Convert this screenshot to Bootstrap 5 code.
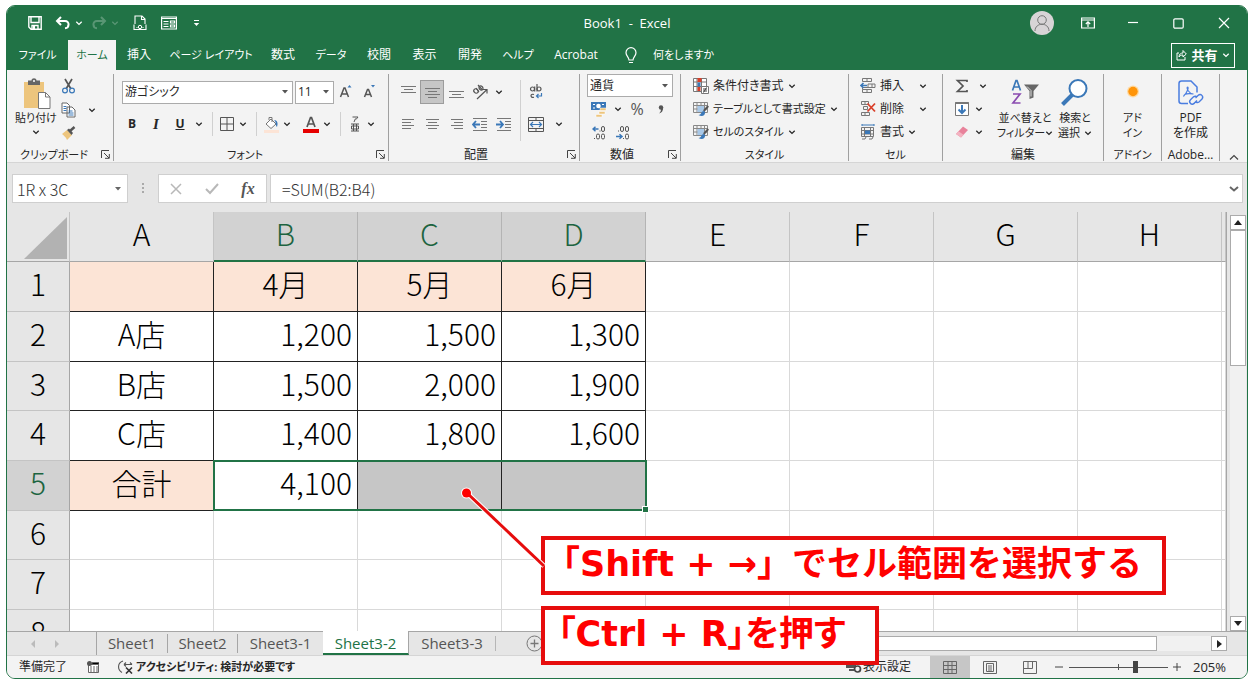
<!DOCTYPE html>
<html lang="ja">
<head>
<meta charset="utf-8">
<meta name="viewport" content="width=device-width, initial-scale=1">
<title>Book1 - Excel</title>
<link href="https://cdn.jsdelivr.net/npm/bootstrap@5.3.0/dist/css/bootstrap.min.css" rel="stylesheet">
<style>
:root{--xl:#217346;--line:#a6a6a6;--soft:#d9d9d9}
body{font-family:"Open Sans","Noto Sans CJK JP",sans-serif;font-size:12px;line-height:16px;color:#262626;background:#fff;padding:5px 6px 6px;font-feature-settings:"palt";overflow:hidden}
button{border:0;background:none;padding:0;color:inherit;font:inherit;font-feature-settings:inherit}
svg{display:block;flex:none}
.kana{font-size:11px}
.app{border:1px solid var(--xl);border-radius:9px;background:#e6e6e6}
.app-head{background:var(--xl);color:#fff}
.titlebar{height:34px}
.titlebar .side{flex:1 1 0}
.doc-title{white-space:pre;font-size:13px}
.avatar{width:24px;height:24px;border-radius:50%;background:#d8d4d6;overflow:hidden}
.tabs{height:30px}
.tab-grid{display:grid;grid-template-columns:61px 48px 46px 98px 46px 50px 46px 45px 46px 50px 66px}
.tab-grid a{color:#fff;text-decoration:none;text-align:center;line-height:30px;white-space:nowrap}
.tab-grid a.on{background:#f3f3f3;color:var(--xl)}
.share{width:64px;height:25px;border:1px solid #fff;font-weight:700;font-size:13px;margin-right:12px}
.ribbon{display:grid;grid-template-columns:107fr 275fr 191fr 101fr 168fr 94fr 161fr 58fr 58fr 27fr;height:93px;padding:4px 0 1px;background:#f3f3f3;border-bottom:1px solid #d5d5d5}
.grp{border-right:1px solid #a0a0a0;display:flex;flex-direction:column;min-width:0;white-space:nowrap}
.grp-body{flex:1;display:flex;min-height:0}
.grp-name{line-height:12px;position:relative;text-align:center;height:12px;padding-right:12px}
.grp-name.wide{padding-right:0}
.grp-name svg{position:absolute;right:3px;top:1px}
.big{display:flex;flex-direction:column;align-items:center;line-height:15px;margin-top:4px}
.t{width:24px;height:24px;display:flex;align-items:center;justify-content:center}
.t18{width:18px;height:24px;display:flex;align-items:center;justify-content:center}
.c{width:14px;height:24px;display:flex;align-items:center;justify-content:center}
.s{width:12px;height:24px;display:flex;justify-content:center}
.s::before{content:"";border-left:1px solid #d0d0d0}
.t.on{background:#c6c6c6;border:1px solid #9c9c9c}
.combo{height:23px;border:1px solid #ababab;border-radius:0;background:#fff url("data:image/svg+xml,%3Csvg xmlns='http://www.w3.org/2000/svg' viewBox='0 0 6 4'%3E%3Cpath d='M0 0h6L3 3.6z' fill='%23555'/%3E%3C/svg%3E") no-repeat right 4px center/6px 4px;appearance:none;padding:0 2px;font:inherit;font-feature-settings:"palt";color:#262626}
.fx-bar{height:49px;padding:11px 4px 0 5px;font-family:"Noto Sans CJK JP",sans-serif;font-weight:300;font-size:16px}
.fx-bar .cellbox{height:29px;background:#fff;border:1px solid #cfcfcf}
.fx-bar input{border:0;background:none;font:inherit;color:#333;min-width:0;padding:0;outline:0}
.sheet{min-height:0;overflow:hidden}
.grid-wrap{overflow:hidden;background:#fff;border-right:1px solid var(--line)}
.cells{table-layout:fixed;width:100%;border-collapse:separate;border-spacing:0;font-family:"Noto Sans CJK JP",sans-serif;font-weight:300;font-size:30px;line-height:40px;color:#000;font-feature-settings:normal}
.cells th{font-weight:300;text-align:center;background:#e6e6e6;padding:0 0 7px}
.cells td{padding:0 5px 7px;border-right:1px solid var(--soft);border-bottom:1px solid var(--soft);text-align:right}
.cells thead th{height:50px;border-right:1px solid #c4c4c4;border-bottom:1px solid var(--line)}
.cells thead th.corner{padding:0}
.cells thead th.sel{background:#d2d2d2;color:#1d6440;border-right-color:#b4b4b4;border-bottom:2px solid var(--xl)}
.cells tbody tr{height:50px}
.cells tbody tr:nth-child(3n){height:49px}
.cells tbody th{border-right:1px solid var(--line);border-bottom:1px solid #c4c4c4}
.cells tbody th.sel{background:#d2d2d2;color:#1d6440}
.cells td.bx{border-color:#222}
.cells td.hd{background:#fce4d6;text-align:center}
.cells td.nm{text-align:center}
.cells td.pick{background:#c6c6c6}
.range{position:absolute;z-index:1;left:-1px;top:-1px;width:calc(300% + 5px);height:calc(100% + 2px);border:2px solid var(--xl);pointer-events:none}
.range::after{content:"";position:absolute;right:-3px;bottom:-3px;width:5px;height:5px;background:var(--xl);outline:1px solid #fff}
.vscroll{width:20px;padding:3px 1px 0 3px}
.sbtn{width:16px;height:15px;background:#fff;border:1px solid #ababab;display:flex;align-items:center;justify-content:center}
.vthumb{width:16px;height:136px;background:#fff;border:1px solid #ababab}
.vtrack{background:#f1f1f1;width:16px}
.sheetbar{height:25px;border-top:1px solid var(--line);border-bottom:1px solid #d5d5d5}
.sheetbar a{height:22px;line-height:22px;font-size:15px;color:#555;text-decoration:none;text-align:center;width:86px}
.sheetbar a.short{width:70px}
.sheetbar a+a::before{content:"";float:left;border-left:1px solid var(--line);height:19px;margin-top:2px}
.sheetbar a.on{background:#fff;color:var(--xl);border-bottom:2px solid var(--xl);border-right:1px solid var(--line);margin-top:-1px;height:24px;line-height:24px}
.sheetbar a.on+a::before,.sheetbar a.on::before{display:none}
.hthumb{height:15px;background:#fff;border:1px solid #ababab;width:330px}
.status{height:22px;background:#f3f3f3;border-radius:0 0 8px 8px}
.view{width:40px;height:22px;display:flex;align-items:center;justify-content:center}
.view.on{background:#c6c6c6}
.zoom{appearance:none;width:99px;height:12px;background:linear-gradient(#555,#555) center/100% 1px no-repeat,linear-gradient(#555,#555) center/1px 6px no-repeat;margin:0}
.zoom::-webkit-slider-thumb{appearance:none;width:5px;height:12px;background:#444}
.note{position:absolute;z-index:3;left:534px;height:59px;border:4px solid #e60d0d;background:#fff;color:#f00;font:700 35px/48px "DejaVu Sans","Noto Sans CJK JP",sans-serif;font-feature-settings:normal;white-space:nowrap}
.note-a{top:530px;width:625px}
.note-b{top:600px;width:338px;padding-left:13px;font-feature-settings:"palt"}
.leader{position:absolute;z-index:4;left:453px;top:480px}
</style>
</head>
<body class="vh-100">
<svg width="0" height="0" class="position-absolute" aria-hidden="true">
<symbol id="chev" viewBox="0 0 8 8"><path d="M1.3 2.8 4 5.4l2.700-2.600" fill="none" stroke="currentColor" stroke-width="1.300"/></symbol>
<symbol id="launch" viewBox="0 0 9 9"><path d="M.5 8V.5H8M3 3l5 5M8.300 4v4.300H4" fill="none" stroke="#444"/></symbol>
<symbol id="brushtable" viewBox="0 0 16 16"><path d="M.5 1.500h14v10H.5zM.5 4.500h14M.5 8h14M4 1.500v10M8 1.500v10M11.500 1.500v10" fill="none" stroke="#888"/><path d="M4.500 5h6.500v6H4.500z" fill="#a8c8e8"/><path d="m15.300 5-4.500 5" stroke="#555" stroke-width="2"/><path d="M11 10c-3 0-2 3.500-5.500 4 3 1.800 7 1 6.500-3z" fill="#3b78b8"/></symbol>
</svg>

<div class="app position-relative d-flex flex-column h-100">
 <header class="app-head rounded-top-3 flex-shrink-0">
  <div class="titlebar d-flex align-items-center">
   <div class="side d-flex align-items-center">
    <button aria-label="保存" style="margin-left:21px"><svg width="14" height="14" viewBox="0 0 14 14"><path d="M.8.8h12.400v12.400H3L.8 11zM3 1v5.500h8V1M4 13V9.500h6V13" fill="none" stroke="#fff" stroke-width="1.400"/><path d="M5 10h2v3H5z" fill="#fff"/></svg></button>
    <button aria-label="元に戻す" class="d-flex align-items-center gap-1" style="margin-left:13px"><svg width="16" height="14" viewBox="0 0 16 14"><path d="M6 1 2 5l4 4M2.500 5h7.500c5 0 4.500 7 0 7.300" fill="none" stroke="#fff" stroke-width="2"/></svg><svg width="8" height="8"><use href="#chev"/></svg></button>
    <button aria-label="やり直し" class="d-flex align-items-center gap-1 ms-2 opacity-25"><svg width="16" height="14" viewBox="0 0 16 14"><path d="m10 1 4 4-4 4M13.500 5H6C1 5 1.500 12 6 12.300" fill="none" stroke="#fff" stroke-width="2"/></svg><svg width="8" height="8"><use href="#chev"/></svg></button>
    <button aria-label="印刷プレビュー" style="margin-left:14px"><svg width="14" height="16" viewBox="0 0 14 16"><path d="M2 9V1h7l3 3v5M8.500 1v3.500H12M1 9.500v5h12v-5M3.500 12.500h1M9.500 12.500h1" fill="none" stroke="#fff" stroke-width="1.100"/><circle cx="7" cy="12" r="1.700" fill="none" stroke="#fff"/></svg></button>
    <button aria-label="フォーム" style="margin-left:14px"><svg width="16" height="14" viewBox="0 0 16 14"><path d="M.6 1h14.800v12H.6zM1 2.500h14M2.500 5.500h5M2.500 8h5M2.500 10.500h5M9.500 5h4v2h-4zM9.500 9h4v2h-4z" fill="none" stroke="#fff" stroke-width="1.200"/></svg></button>
    <button aria-label="ユーザー設定" class="ms-3"><svg width="7" height="8" viewBox="0 0 7 8"><path d="M1 1.500h5" stroke="#fff"/><path d="M.8 4h5.400L3.500 7z" fill="#fff"/></svg></button>
   </div>
   <div class="doc-title">Book1  -  Excel</div>
   <div class="side d-flex align-items-center justify-content-end">
    <button aria-label="アカウント" class="avatar"><svg width="24" height="24" viewBox="0 0 24 24"><circle cx="12" cy="9" r="4.300" fill="none" stroke="#777"/><path d="M5 20c0-9 14-9 14 0" fill="none" stroke="#777"/></svg></button>
    <button aria-label="リボンの表示オプション" style="margin-left:27px"><svg width="14" height="12" viewBox="0 0 14 12"><path d="M.6 1h12.800v10H.6zM1 3h12M7 10V5M4.800 7 7 4.800 9.200 7" fill="none" stroke="#fff" stroke-width="1.200"/></svg></button>
    <button aria-label="最小化" style="margin-left:32px"><svg width="12" height="12" viewBox="0 0 12 12"><path d="M1 5.500h10" stroke="#fff" stroke-width="1.200"/></svg></button>
    <button aria-label="最大化" style="margin-left:34px"><svg width="11" height="11" viewBox="0 0 11 11"><rect x=".8" y=".8" width="9.400" height="9.400" rx="1.200" fill="none" stroke="#fff" stroke-width="1.200"/></svg></button>
    <button aria-label="閉じる" style="margin:0 17px 0 34px"><svg width="12" height="12" viewBox="0 0 12 12"><path d="m1 1 10 10M11 1 1 11" stroke="#fff" stroke-width="1.200"/></svg></button>
   </div>
  </div>
  <div class="tabs d-flex align-items-center">
   <nav class="tab-grid"><a href="#" class="kana">ファイル</a><a href="#" class="on kana">ホーム</a><a href="#">挿入</a><a href="#" class="kana">ページ レイアウト</a><a href="#">数式</a><a href="#" class="kana">データ</a><a href="#">校閲</a><a href="#">表示</a><a href="#">開発</a><a href="#" class="kana">ヘルプ</a><a href="#">Acrobat</a></nav>
   <button class="d-flex align-items-center ms-3"><svg width="12" height="17" viewBox="0 0 12 17" class="me-3"><path d="M4 13c0-3-3-4-3-7.300a5 5 0 0 1 10 0C11 9 8 10 8 13zM4 15.500h4" fill="none" stroke="#fff" stroke-width="1.200"/></svg><span class="kana">何をしますか</span></button>
   <button class="share ms-auto d-flex align-items-center justify-content-center gap-1"><svg width="11" height="12" viewBox="0 0 11 12"><path d="M3 4H1v7h8V8M3 8c0-3 2-4 4-4V1.500L10.300 5 7 8V6C5 6 4 6.500 3 8z" fill="none" stroke="#fff"/></svg>共有<svg width="8" height="8"><use href="#chev"/></svg></button>
  </div>
 </header>

 <section class="ribbon flex-shrink-0" aria-label="ホーム">
  <div class="grp">
   <div class="grp-body">
    <button class="big kana ps-2"><svg width="32" height="32" viewBox="0 0 32 32"><path d="M4 4h20v26H4z" fill="#edc57d"/><path d="M8 2.500h3.500c0-3 5-3 5 0H20V7H8z" fill="#666"/><circle cx="14" cy="3" r="1" fill="#fff"/><path d="M18.500 14.500h7l4.500 4.500v11.500H18.500z" fill="#fff" stroke="#777"/><path d="M25.500 14.500V19H30" fill="none" stroke="#777"/></svg>貼り付け<svg width="8" height="14"><use href="#chev"/></svg></button>
    <div class="d-flex flex-column ps-1 gap-2 pt-1 ms-px">
     <button aria-label="切り取り"><svg width="16" height="16" viewBox="0 0 16 16"><path d="m4 1 6 10M11 1 5 11" stroke="#555" stroke-width="1.700"/><circle cx="4" cy="12.500" r="2.400" fill="none" stroke="#3b78b8" stroke-width="1.200"/><circle cx="11" cy="12.500" r="2.400" fill="none" stroke="#3b78b8" stroke-width="1.200"/></svg></button>
     <button aria-label="コピー" class="d-flex align-items-center"><svg width="16" height="16" viewBox="0 0 16 16"><path d="M1 1h5l2.500 2.500V11H1zM6 5h5l3 3v7H6z" fill="#fff" stroke="#666"/><path d="M2.500 4.500h3M2.500 6.500h3M2.500 8.500h3M7.500 9h4M7.500 11h5M7.500 13h5" stroke="#3b78b8"/></svg><svg width="8" height="8" style="margin-left:11px"><use href="#chev"/></svg></button>
     <button aria-label="書式のコピー"><svg width="16" height="14" viewBox="0 0 16 14"><path d="m1 8 5-4 5 5-5 5c-1-3-3-4-5-6z" fill="#edc57d"/><path d="m6 4 2-1.500L12 7l-1.500 2z" fill="#555"/><path d="m9 5 4.500-4" stroke="#555" stroke-width="2.500"/></svg></button>
    </div>
   </div>
   <div class="grp-name kana">クリップボード<svg width="9" height="9"><use href="#launch"/></svg></div>
  </div>

  <div class="grp">
   <div class="grp-body flex-column ps-2" style="padding-top:6px">
    <div class="d-flex align-items-center">
     <select class="combo kana" aria-label="フォント" style="width:171px"><option>游ゴシック</option></select>
     <select class="combo" aria-label="フォント サイズ" style="width:39px;margin-left:2px"><option>11</option></select>
     <button class="t" aria-label="拡大"><svg width="14" height="16" viewBox="0 0 14 16"><path d="m1.500 13 3.500-9h1l3.500 9M3 10h5" fill="none" stroke="#555" stroke-width="1.500"/><path d="M8.500 3.500h4L10.500 1z" fill="#3b78b8"/></svg></button>
     <button class="t" aria-label="縮小"><svg width="14" height="16" viewBox="0 0 14 16"><path d="m1.500 13 3-7.500h1l3 7.500M3 10.500h4" fill="none" stroke="#555" stroke-width="1.500"/><path d="M8 1h4l-2 2.500z" fill="#3b78b8"/></svg></button>
    </div>
    <div class="d-flex align-items-center mt-2" style="margin-left:-2px">
     <button class="t fw-bold">B</button><button class="t fw-bold fst-italic" style="font-family:'Liberation Serif',serif;font-size:15px">I</button><button class="t fw-bold text-decoration-underline">U</button><button class="c" aria-label="下線"><svg width="8" height="8"><use href="#chev"/></svg></button><span class="s"></span>
     <button class="t18" aria-label="罫線"><svg width="14" height="14" viewBox="0 0 14 14"><path d="M.5.5h13v13H.5zM7 1v12M1 7h12" fill="none" stroke="#555"/></svg></button><button class="c" aria-label="罫線の種類"><svg width="8" height="8"><use href="#chev"/></svg></button><span class="s"></span>
     <button class="t18" aria-label="塗りつぶし"><svg width="17" height="17" viewBox="0 0 17 17"><path d="M1 14h15v3H1z" fill="#fce4d6"/><path d="m3 8 5-5 5 5-5 4.500zM6 4V1.500h3V6" fill="#fff" stroke="#777"/><path d="M11 4c4 0 4 4 3 7-2-2 0-4-3-7z" fill="#3b78b8"/></svg></button><button class="c me-2" aria-label="塗りつぶしの色"><svg width="8" height="8"><use href="#chev"/></svg></button>
     <button class="t18" aria-label="フォントの色"><svg width="16" height="17" viewBox="0 0 16 17"><path d="M4 11 7.500 1.500h1L12 11M5 8h6" fill="none" stroke="#555" stroke-width="1.700"/><path d="M0 13h16v4H0z" fill="#e60000"/></svg></button><button class="c" aria-label="文字の色"><svg width="8" height="8"><use href="#chev"/></svg></button><span class="s"></span>
     <button class="t18" aria-label="ふりがな"><svg width="12" height="16" viewBox="0 0 12 16"><path d="M3.500 1H9L7 3.500M6.500 2.500 5 6M2 8h8M2 15h8M4.500 8v7M7.500 8v7M2.500 10h7v3h-7z" fill="none" stroke="#555"/></svg></button><button class="c" aria-label="ふりがなの設定"><svg width="8" height="8"><use href="#chev"/></svg></button>
    </div>
   </div>
   <div class="grp-name kana">フォント<svg width="9" height="9"><use href="#launch"/></svg></div>
  </div>

  <div class="grp">
   <div class="grp-body" style="padding:6px 0 0 7px">
    <div>
     <div class="d-flex">
      <button class="t" aria-label="上揃え"><svg width="15" height="14" viewBox="0 0 15 14"><path d="M0 1.500h15M3 4.500h9M0 7.500h15" stroke="#777"/></svg></button>
      <button class="t on" aria-label="上下中央揃え"><svg width="15" height="14" viewBox="0 0 15 14"><path d="M0 3.500h15M3 6.500h9M0 9.500h15M3 12.500h9" stroke="#777"/></svg></button>
      <button class="t" aria-label="下揃え"><svg width="15" height="14" viewBox="0 0 15 14"><path d="M0 6.500h15M3 9.500h9M0 12.500h15" stroke="#777"/></svg></button>
      <button class="t" aria-label="方向"><svg width="17" height="16" viewBox="0 0 17 16"><g fill="none" stroke="#555" stroke-width="1.200"><ellipse cx="4" cy="7" rx="2" ry="2.400" transform="rotate(-45 4 7)"/><path d="m4 4 3 4M6 1l4.500 5M5 15 15 5.500M11 5.500h4v4"/><ellipse cx="9" cy="4" rx="1.800" ry="2.200" transform="rotate(-45 9 4)"/></g></svg></button>
      <button class="c" aria-label="方向の種類"><svg width="8" height="8"><use href="#chev"/></svg></button>
     </div>
     <div class="d-flex mt-2">
      <button class="t" aria-label="左揃え"><svg width="13" height="12" viewBox="0 0 13 12"><path d="M0 1.500h12M0 4.500h9M0 7.500h12M0 10.500h9" stroke="#777"/></svg></button>
      <button class="t" aria-label="中央揃え"><svg width="13" height="12" viewBox="0 0 13 12"><path d="M0 1.500h13M2 4.500h9M0 7.500h13M2 10.500h9" stroke="#777"/></svg></button>
      <button class="t" aria-label="右揃え"><svg width="13" height="12" viewBox="0 0 13 12"><path d="M1 1.500h12M4 4.500h9M1 7.500h12M4 10.500h9" stroke="#777"/></svg></button>
      <button class="t" aria-label="インデントを減らす"><svg width="16" height="13" viewBox="0 0 16 13"><path d="M1 .5h14M9 3.500h6M9 6.500h6M9 9.500h6M1 12.500h14" stroke="#777"/><path d="M8 6.500H1M4 3 1 6.500 4 10" fill="none" stroke="#3b78b8" stroke-width="1.800"/></svg></button>
      <button class="t" aria-label="インデントを増やす"><svg width="16" height="13" viewBox="0 0 16 13"><path d="M1 .5h14M9 3.500h6M9 6.500h6M9 9.500h6M1 12.500h14" stroke="#777"/><path d="M0 6.500h7M4 3l3 3.500L4 10" fill="none" stroke="#3b78b8" stroke-width="1.800"/></svg></button>
     </div>
    </div>
    <span class="s h-100 pb-2" style="width:8px"></span>
    <div>
     <button class="t" aria-label="折り返して全体を表示する"><svg width="14" height="16" viewBox="0 0 14 16"><g fill="none" stroke="#555" stroke-width="1.200"><circle cx="3.500" cy="5" r="2"/><path d="M5.700 2.500V7.500M8 0v7.500M5 10.500c-4-1.500-4 4 0 2.700"/><circle cx="10" cy="5" r="2"/></g><path d="M12.500 9v3H8M9.500 10 7.500 12l2 2" fill="none" stroke="#3b78b8" stroke-width="1.200"/></svg></button>
     <div class="d-flex mt-2"><button class="t" aria-label="セルを結合して中央揃え"><svg width="16" height="15" viewBox="0 0 16 15"><path d="M.5.500h15v14H.5zM.5 3.500h15M.5 11.500h15M8 .5v3M8 11.500v3" fill="none" stroke="#555"/><path d="M2.500 7.500h11M5 5 2.500 7.500 5 10M11 5l2.500 2.500L11 10" fill="none" stroke="#3b78b8" stroke-width="1.200"/></svg></button><button class="c ms-1" aria-label="結合の種類"><svg width="8" height="8"><use href="#chev"/></svg></button></div>
    </div>
   </div>
   <div class="grp-name" style="padding-right:16px">配置<svg width="9" height="9"><use href="#launch"/></svg></div>
  </div>

  <div class="grp">
   <div class="grp-body flex-column" style="padding-left:7px">
    <select class="combo" aria-label="表示形式" style="width:86px"><option>通貨</option></select>
    <div class="d-flex align-items-center">
     <button class="t" aria-label="通貨表示形式"><svg width="16" height="16" viewBox="0 0 16 16"><path d="M0 1h15v8H0z" fill="#3b78b8"/><path d="M2 3.500h2M11 3.500h2M2 7h2" stroke="#fff"/><circle cx="7.500" cy="5" r="2.300" fill="#fff"/><path d="M9 7h6v2.500H9zM8 10.500h6V13H8zM5 13.500h6V16H5z" fill="#edc57d" stroke="#fff" stroke-width=".5"/></svg></button><button class="c" aria-label="通貨の種類"><svg width="8" height="8"><use href="#chev"/></svg></button>
     <button class="t" style="font-size:16px;color:#555">%</button><button class="t fw-bold" aria-label="桁区切り"><svg width="6" height="9" viewBox="0 0 6 9"><circle cx="3" cy="2.500" r="2.200" fill="#555"/><path d="M5.200 2.500C5.200 6 3.500 8 1 8.500 2.500 7 3 6 3 4z" fill="#555"/></svg></button>
    </div>
    <div class="d-flex">
     <button class="t" aria-label="小数点以下の表示桁数を増やす"><svg width="14" height="14" viewBox="0 0 14 14"><path d="M6.500 3H1M3.500.8 1 3l2.500 2.200" fill="none" stroke="#3b78b8" stroke-width="1.500"/><g fill="none" stroke="#555"><rect x="9.500" y=".5" width="3" height="5" rx="1.500"/><rect x="4.500" y="8" width="3" height="5" rx="1.500"/><rect x="9.500" y="8" width="3" height="5" rx="1.500"/><path d="M7.500 5h1M2 12.500h1"/></g></svg></button>
     <button class="t" aria-label="小数点以下の表示桁数を減らす"><svg width="14" height="14" viewBox="0 0 14 14"><path d="M0 10.500h6M3.500 8.300 6 10.500l-2.500 2.200" fill="none" stroke="#3b78b8" stroke-width="1.500"/><g fill="none" stroke="#555"><rect x="9.500" y=".5" width="3" height="5" rx="1.500"/><rect x="4.500" y=".5" width="3" height="5" rx="1.500"/><rect x="9.500" y="8" width="3" height="5" rx="1.500"/><path d="M2 5h1M7 12.500h1"/></g></svg></button>
    </div>
   </div>
   <div class="grp-name" style="padding-right:16px">数値<svg width="9" height="9"><use href="#launch"/></svg></div>
  </div>

  <div class="grp">
   <div class="grp-body flex-column kana" style="padding-left:12px">
    <button class="d-flex align-items-center gap-1" style="height:23px"><svg width="16" height="16" viewBox="0 0 16 16"><path d="M.5.500h13v13H.5zM4 .5v13M8.500.5v13M.5 4h13M.5 8.500h13" fill="#fff" stroke="#777"/><path d="M4.500 0h4v4h-4zM4.500 9h3v4h-3z" fill="#d9402a"/><path d="M4.500 4.500h3v4h-3z" fill="#3b78b8"/><path d="M8.500 8.500h7v7h-7z" fill="#fff" stroke="#777"/><path d="M10 11h4M10 13h4M13.500 9.500l-3 5" stroke="#444"/></svg><span style="font-size:12px">条件付き書式</span><svg width="8" height="8"><use href="#chev"/></svg></button>
    <button class="d-flex align-items-center gap-1" style="height:23px"><svg width="16" height="16"><use href="#brushtable"/></svg>テーブルとして書式設定<svg width="8" height="8"><use href="#chev"/></svg></button>
    <button class="d-flex align-items-center gap-1" style="height:23px"><svg width="16" height="16"><use href="#brushtable"/></svg>セルのスタイル<svg width="8" height="8"><use href="#chev"/></svg></button>
   </div>
   <div class="grp-name wide kana">スタイル</div>
  </div>

  <div class="grp">
   <div class="grp-body flex-column" style="padding-left:11px">
    <button class="d-flex align-items-center gap-1" style="height:23px"><svg width="16" height="15" viewBox="0 0 16 15"><path d="M2.500.5h9v3h-9zM7 .5v3M2.500 11.500h9v3h-9zM7 11.500v3M8 6h7v3.500H8zM12 6v3.500M2.500 11.500v-2h9" fill="none" stroke="#777"/><path d="M7 7.500H1M3.500 5 1 7.500 3.500 10" fill="none" stroke="#3b78b8" stroke-width="1.600"/></svg>挿入<svg width="8" height="8" style="margin-left:11px"><use href="#chev"/></svg></button>
    <button class="d-flex align-items-center gap-1" style="height:23px"><svg width="16" height="15" viewBox="0 0 16 15"><path d="M1.500.5h7v3h-7zM5 .5v3M1.500 11.500h8v3h-8zM5 11.500v3M3.500 5.500h4v3h-4z" fill="none" stroke="#777"/><path d="m7.500 2.500 7.500 8M15 2.500l-7.500 8" stroke="#d9402a" stroke-width="1.800"/></svg>削除<svg width="8" height="8" style="margin-left:11px"><use href="#chev"/></svg></button>
    <button class="d-flex align-items-center gap-1" style="height:23px"><svg width="16" height="16" viewBox="0 0 16 16"><path d="M1.500 3.500h12v9h-12zM4.500 3.500v9M10.500 3.500v9M1.500 6.500h12M1.500 10h12M2 15h3l1-2M9 15h3l1-2" fill="none" stroke="#777"/><path d="M2 1h12M2 0v2M14 0v2" stroke="#3b78b8"/><path d="M5 6.500h5V10H5z" fill="#3b78b8"/></svg>書式<svg width="8" height="8"><use href="#chev"/></svg></button>
   </div>
   <div class="grp-name wide kana">セル</div>
  </div>

  <div class="grp">
   <div class="grp-body" style="padding-left:10px">
    <div class="d-flex flex-column" style="width:44px">
     <button class="d-flex align-items-center" style="height:23px" aria-label="オート SUM"><svg width="18" height="14" viewBox="0 0 18 14"><path d="M14 3V1.500H4.500L10 7l-5.500 5.500H14V11" fill="none" stroke="#555" stroke-width="1.700"/></svg><svg width="8" height="8" class="ms-2"><use href="#chev"/></svg></button>
     <button class="d-flex align-items-center gap-1" style="height:23px" aria-label="フィル"><svg width="18" height="14" viewBox="0 0 18 14"><path d="M2.500.5h13v13h-13z" fill="#fff" stroke="#777"/><path d="M2.500 1h13" stroke="#777" stroke-width="2"/><path d="M9 3v8M5.500 7.500 9 11l3.500-3.500" fill="none" stroke="#3b78b8" stroke-width="2"/></svg><svg width="8" height="8"><use href="#chev"/></svg></button>
     <button class="d-flex align-items-center gap-1" style="height:23px" aria-label="クリア"><svg width="18" height="14" viewBox="0 0 18 14"><path d="m3 9 7-7.500 5 3.500-7 7.500z" fill="#e8829b"/><path d="m3 9 2.500-2.700 5 3.500L8 12.500z" fill="#f3b3c1"/></svg><svg width="8" height="8"><use href="#chev"/></svg></button>
    </div>
    <button class="big kana" style="width:56px"><svg width="30" height="32" viewBox="0 0 30 31"><g fill="none" stroke-width="1.700"><path d="M2.500 12 6 2h1l3.500 10M4 8.500h5" stroke="#3b78b8"/><path d="M3 15.500h7l-7 9h7.500" stroke="#8a4bb0"/></g><path d="M14 6h15l-5.500 6.500V19l-4 1.500v-8z" fill="#666"/><path d="m17 8 4 4v6" fill="none" stroke="#ddd"/></svg>並べ替えと<br><span class="d-flex align-items-center">フィルター<svg width="8" height="8"><use href="#chev"/></svg></span></button>
    <button class="big kana" style="width:44px"><svg width="30" height="32" viewBox="0 0 30 31"><circle cx="18" cy="10" r="8.500" fill="#fff" stroke="#3b78b8" stroke-width="2"/><path d="M12 16.500 2.500 26" stroke="#3b78b8" stroke-width="4"/></svg>検索と<br><span class="d-flex align-items-center">選択<svg width="8" height="8" class="ms-1"><use href="#chev"/></svg></span></button>
   </div>
   <div class="grp-name wide">編集</div>
  </div>

  <div class="grp">
   <div class="grp-body justify-content-center"><button class="big kana"><svg width="30" height="32" viewBox="0 0 30 31"><circle cx="15" cy="13" r="6" fill="#ffd9a0"/><circle cx="15" cy="13" r="4.700" fill="#ff9408"/></svg><span>アド<br>イン</span></button></div>
   <div class="grp-name wide kana">アドイン</div>
  </div>

  <div class="grp">
   <div class="grp-body justify-content-center"><button class="big"><svg width="30" height="32" viewBox="0 0 30 31"><g fill="none" stroke="#4a7de0" stroke-width="1.500"><path d="M13 25H6.500A2.500 2.500 0 0 1 4 22.500V5A2.500 2.500 0 0 1 6.500 2.500H16L22 8.500V14"/><path d="M12.500 8.500c1.500 0 .5 4-4 9.500M12.500 8.500c-1.200 1 1 6.500 6 7M8.500 18c.5-2.500 5-3.300 10-2.500" stroke-width="1.100"/><path d="m20.500 19.500 2.500-2.500c3-2.500 6 1 4 3.500l-3 3c-1.500 1-3 .5-3.500-.5M22 22l-2.500 2.500c-1 1.500-3 1.500-4 .5s-1-2.700 0-3.700l3-3c1.500-1 3-.5 3.500.5" stroke-width="1.400"/></g></svg><span>PDF<br>を作成</span></button></div>
   <div class="grp-name wide">Adobe…</div>
  </div>
  <div class="d-flex align-items-end justify-content-center"><button aria-label="リボンを折りたたむ"><svg width="10" height="7" viewBox="0 0 10 7"><path d="M1 5.500 5 1.500l4 4" fill="none" stroke="#444" stroke-width="1.200"/></svg></button></div>
 </section>

 <div class="fx-bar d-flex flex-shrink-0">
  <div class="cellbox d-flex align-items-center" style="width:116px"><input class="flex-grow-1 ps-1" aria-label="名前ボックス" value="1R x 3C"><svg width="14" height="6" viewBox="0 0 14 6"><path d="M2 1h6L5 4.500z" fill="#666"/></svg></div>
  <svg width="30" height="29" viewBox="0 0 30 29"><path d="M14 9h2v2h-2zM14 13h2v2h-2zM14 17h2v2h-2z" fill="#aaa"/></svg>
  <div class="cellbox d-flex align-items-center justify-content-around" style="width:109px">
   <button aria-label="キャンセル"><svg width="12" height="12" viewBox="0 0 12 12"><path d="m1 1 10 10M11 1 1 11" stroke="#b8b8b8" stroke-width="1.500"/></svg></button>
   <button aria-label="入力"><svg width="14" height="12" viewBox="0 0 14 12"><path d="m1 6 4 4 8-9" fill="none" stroke="#b8b8b8" stroke-width="2"/></svg></button>
   <button aria-label="関数の挿入" class="fst-italic fw-bold" style="font-family:'Liberation Serif',serif;color:#555">fx</button>
  </div>
  <div class="cellbox d-flex align-items-center flex-grow-1" style="margin-left:3px"><input class="flex-grow-1" style="margin-left:11px" aria-label="数式バー" value="=SUM(B2:B4)"><svg width="16" height="10" viewBox="0 0 16 10"><path d="m4 3 4 3.500L12 3" fill="none" stroke="#666" stroke-width="2"/></svg></div>
 </div>

 <main class="sheet d-flex flex-grow-1">
  <div class="grid-wrap flex-grow-1">
   <table class="cells">
    <colgroup><col style="width:63px"><col style="width:144px"><col style="width:144px"><col style="width:144px"><col style="width:144px"><col style="width:144px"><col style="width:144px"><col style="width:144px"><col style="width:144px"><col></colgroup>
    <thead><tr><th class="corner" aria-label="すべて選択"><svg width="62" height="48" viewBox="0 0 62 48"><path d="M60 4v42H17z" fill="#b2b2b2"/></svg></th><th>A</th><th class="sel">B</th><th class="sel">C</th><th class="sel">D</th><th>E</th><th>F</th><th>G</th><th>H</th><th></th></tr></thead>
    <tbody>
     <tr><th>1</th><td class="bx hd"></td><td class="bx hd">4月</td><td class="bx hd">5月</td><td class="bx hd">6月</td><td></td><td></td><td></td><td></td><td></td></tr>
     <tr><th>2</th><td class="bx nm">A店</td><td class="bx">1,200</td><td class="bx">1,500</td><td class="bx">1,300</td><td></td><td></td><td></td><td></td><td></td></tr>
     <tr><th>3</th><td class="bx nm">B店</td><td class="bx">1,500</td><td class="bx">2,000</td><td class="bx">1,900</td><td></td><td></td><td></td><td></td><td></td></tr>
     <tr><th>4</th><td class="bx nm">C店</td><td class="bx">1,400</td><td class="bx">1,800</td><td class="bx">1,600</td><td></td><td></td><td></td><td></td><td></td></tr>
     <tr><th class="sel">5</th><td class="bx hd">合計</td><td class="bx position-relative">4,100<span class="range"></span></td><td class="bx pick"></td><td class="bx pick"></td><td></td><td></td><td></td><td></td><td></td></tr>
     <tr><th>6</th><td></td><td></td><td></td><td></td><td></td><td></td><td></td><td></td><td></td></tr>
     <tr><th>7</th><td></td><td></td><td></td><td></td><td></td><td></td><td></td><td></td><td></td></tr>
     <tr><th>8</th><td></td><td></td><td></td><td></td><td></td><td></td><td></td><td></td><td></td></tr>
    </tbody>
   </table>
  </div>
  <div class="vscroll d-flex flex-column flex-shrink-0">
   <button class="sbtn" aria-label="上へ"><svg width="8" height="5" viewBox="0 0 8 5"><path d="M0 5h8L4 0z" fill="#222"/></svg></button>
   <div class="vtrack flex-grow-1"><div class="vthumb"></div></div>
   <button class="sbtn" aria-label="下へ"><svg width="8" height="5" viewBox="0 0 8 5"><path d="M0 0h8L4 5z" fill="#222"/></svg></button>
  </div>
 </main>

 <div class="sheetbar d-flex flex-shrink-0">
  <div class="d-flex align-items-center justify-content-center" style="width:89px;gap:18px;padding-right:13px"><svg width="6" height="8" viewBox="0 0 6 8"><path d="M5 0v8L1 4z" fill="#bbb"/></svg><svg width="6" height="8" viewBox="0 0 6 8"><path d="M1 0v8l4-4z" fill="#bbb"/></svg></div>
  <nav class="d-flex" style="border-left:1px solid #a6a6a6"><a href="#" class="short">Sheet1</a><a href="#" class="short">Sheet2</a><a href="#">Sheet3-1</a><a href="#" class="on">Sheet3-2</a><a href="#">Sheet3-3</a></nav>
  <div class="vr my-1"></div>
  <button aria-label="新しいシート" style="margin-left:30px"><svg width="17" height="17" viewBox="0 0 17 17"><circle cx="8.500" cy="8.500" r="7.500" fill="none" stroke="#777"/><path d="M4.500 8.500h8M8.500 4.500v8" stroke="#777" stroke-width="1.300"/></svg></button>
  <div class="d-flex align-items-center ms-auto" style="margin-right:20px"><div class="hthumb"></div><div style="width:54px;height:15px;background:#f1f1f1"></div><button class="sbtn" aria-label="右へ"><svg width="5" height="8" viewBox="0 0 5 8"><path d="M0 0v8l5-4z" fill="#222"/></svg></button></div>
 </div>

 <footer class="status d-flex align-items-center flex-shrink-0">
  <span style="margin-left:12px">準備完了</span>
  <svg width="12" height="12" viewBox="0 0 12 12" style="margin:0 19px 0 20px"><path d="M1.500 3.500h10v8h-10z" fill="#fff" stroke="#666"/><path d="M5 1.500h7v2H5zM3 6h2M6 6h2M9 6h2M3 8h2M6 8h2M9 8h2M3 10h2M6 10h2M9 10h2" stroke="#666"/><circle cx="2.500" cy="2.500" r="2.500" fill="#555"/></svg>
  <svg width="16" height="14" viewBox="0 0 16 14"><path d="M5 1C-1 3-.5 10 4 12.500M6 4.500h8M6 4.500l2-2M6 4.500l2 2M14 4.500l-2-2" fill="none" stroke="#555" stroke-width="1.100"/><path d="m8 7.500 6 6M14 7.500l-6 6" stroke="#333" stroke-width="1.600"/></svg>
  <span class="kana fw-bold" style="margin-left:2px">アクセシビリティ: 検討が必要です</span>
  <button class="d-flex align-items-center ms-auto" style="margin-right:19px"><svg width="17" height="14" viewBox="0 0 17 14"><path d="M0 1h10v7H0zM3 9h5v2H3z" fill="#555"/><circle cx="11.500" cy="9" r="3" fill="#f3f3f3" stroke="#444" stroke-width="1.700"/></svg>表示設定</button>
  <button class="view on" aria-label="標準"><svg width="14" height="13" viewBox="0 0 14 13"><path d="M.5.500h13v12H.5zM5 .5v12M9 .5v12M.5 4.500h13M.5 8.500h13" fill="none" stroke="#666"/></svg></button>
  <button class="view" aria-label="ページ レイアウト"><svg width="14" height="13" viewBox="0 0 14 13"><path d="M.5.500h13v12H.5zM3.500 2.500h7v8h-7zM5 5h4M5 7h4M5 9h4" fill="none" stroke="#666"/></svg></button>
  <button class="view" aria-label="改ページ プレビュー"><svg width="14" height="13" viewBox="0 0 14 13"><path d="M.5.500h13v12H.5zM5 .5v7M9.500.5v7M.5 7.500h9" fill="none" stroke="#666"/></svg></button>
  <button aria-label="縮小" style="margin:0 6px 0 5px"><svg width="8" height="8" viewBox="0 0 8 8"><path d="M0 4h8" stroke="#444"/></svg></button>
  <input type="range" class="zoom" aria-label="ズーム" min="0" max="100" value="68">
  <button aria-label="拡大" style="margin:0 12px 0 5px"><svg width="8" height="8" viewBox="0 0 8 8"><path d="M0 4h8M4 0v8" stroke="#444"/></svg></button>
  <span style="width:54px;font-size:13px">205%</span>
 </footer>

 <div class="note note-a">「Shift + →」でセル範囲を選択する</div>
 <div class="note note-b">「Ctrl + R」を押す</div>
 <svg class="leader" width="90" height="86" viewBox="0 0 90 86"><path d="m7 7 77 73" stroke="#fff" stroke-width="5"/><circle cx="6.500" cy="7" r="5.500" fill="#fff"/><path d="m7 7 77 73" stroke="#e60d0d" stroke-width="3"/><circle cx="6.500" cy="7" r="4.500" fill="#f00"/></svg>
</div>
<script src="https://cdn.jsdelivr.net/npm/bootstrap@5.3.0/dist/js/bootstrap.bundle.min.js"></script>
</body>
</html>
